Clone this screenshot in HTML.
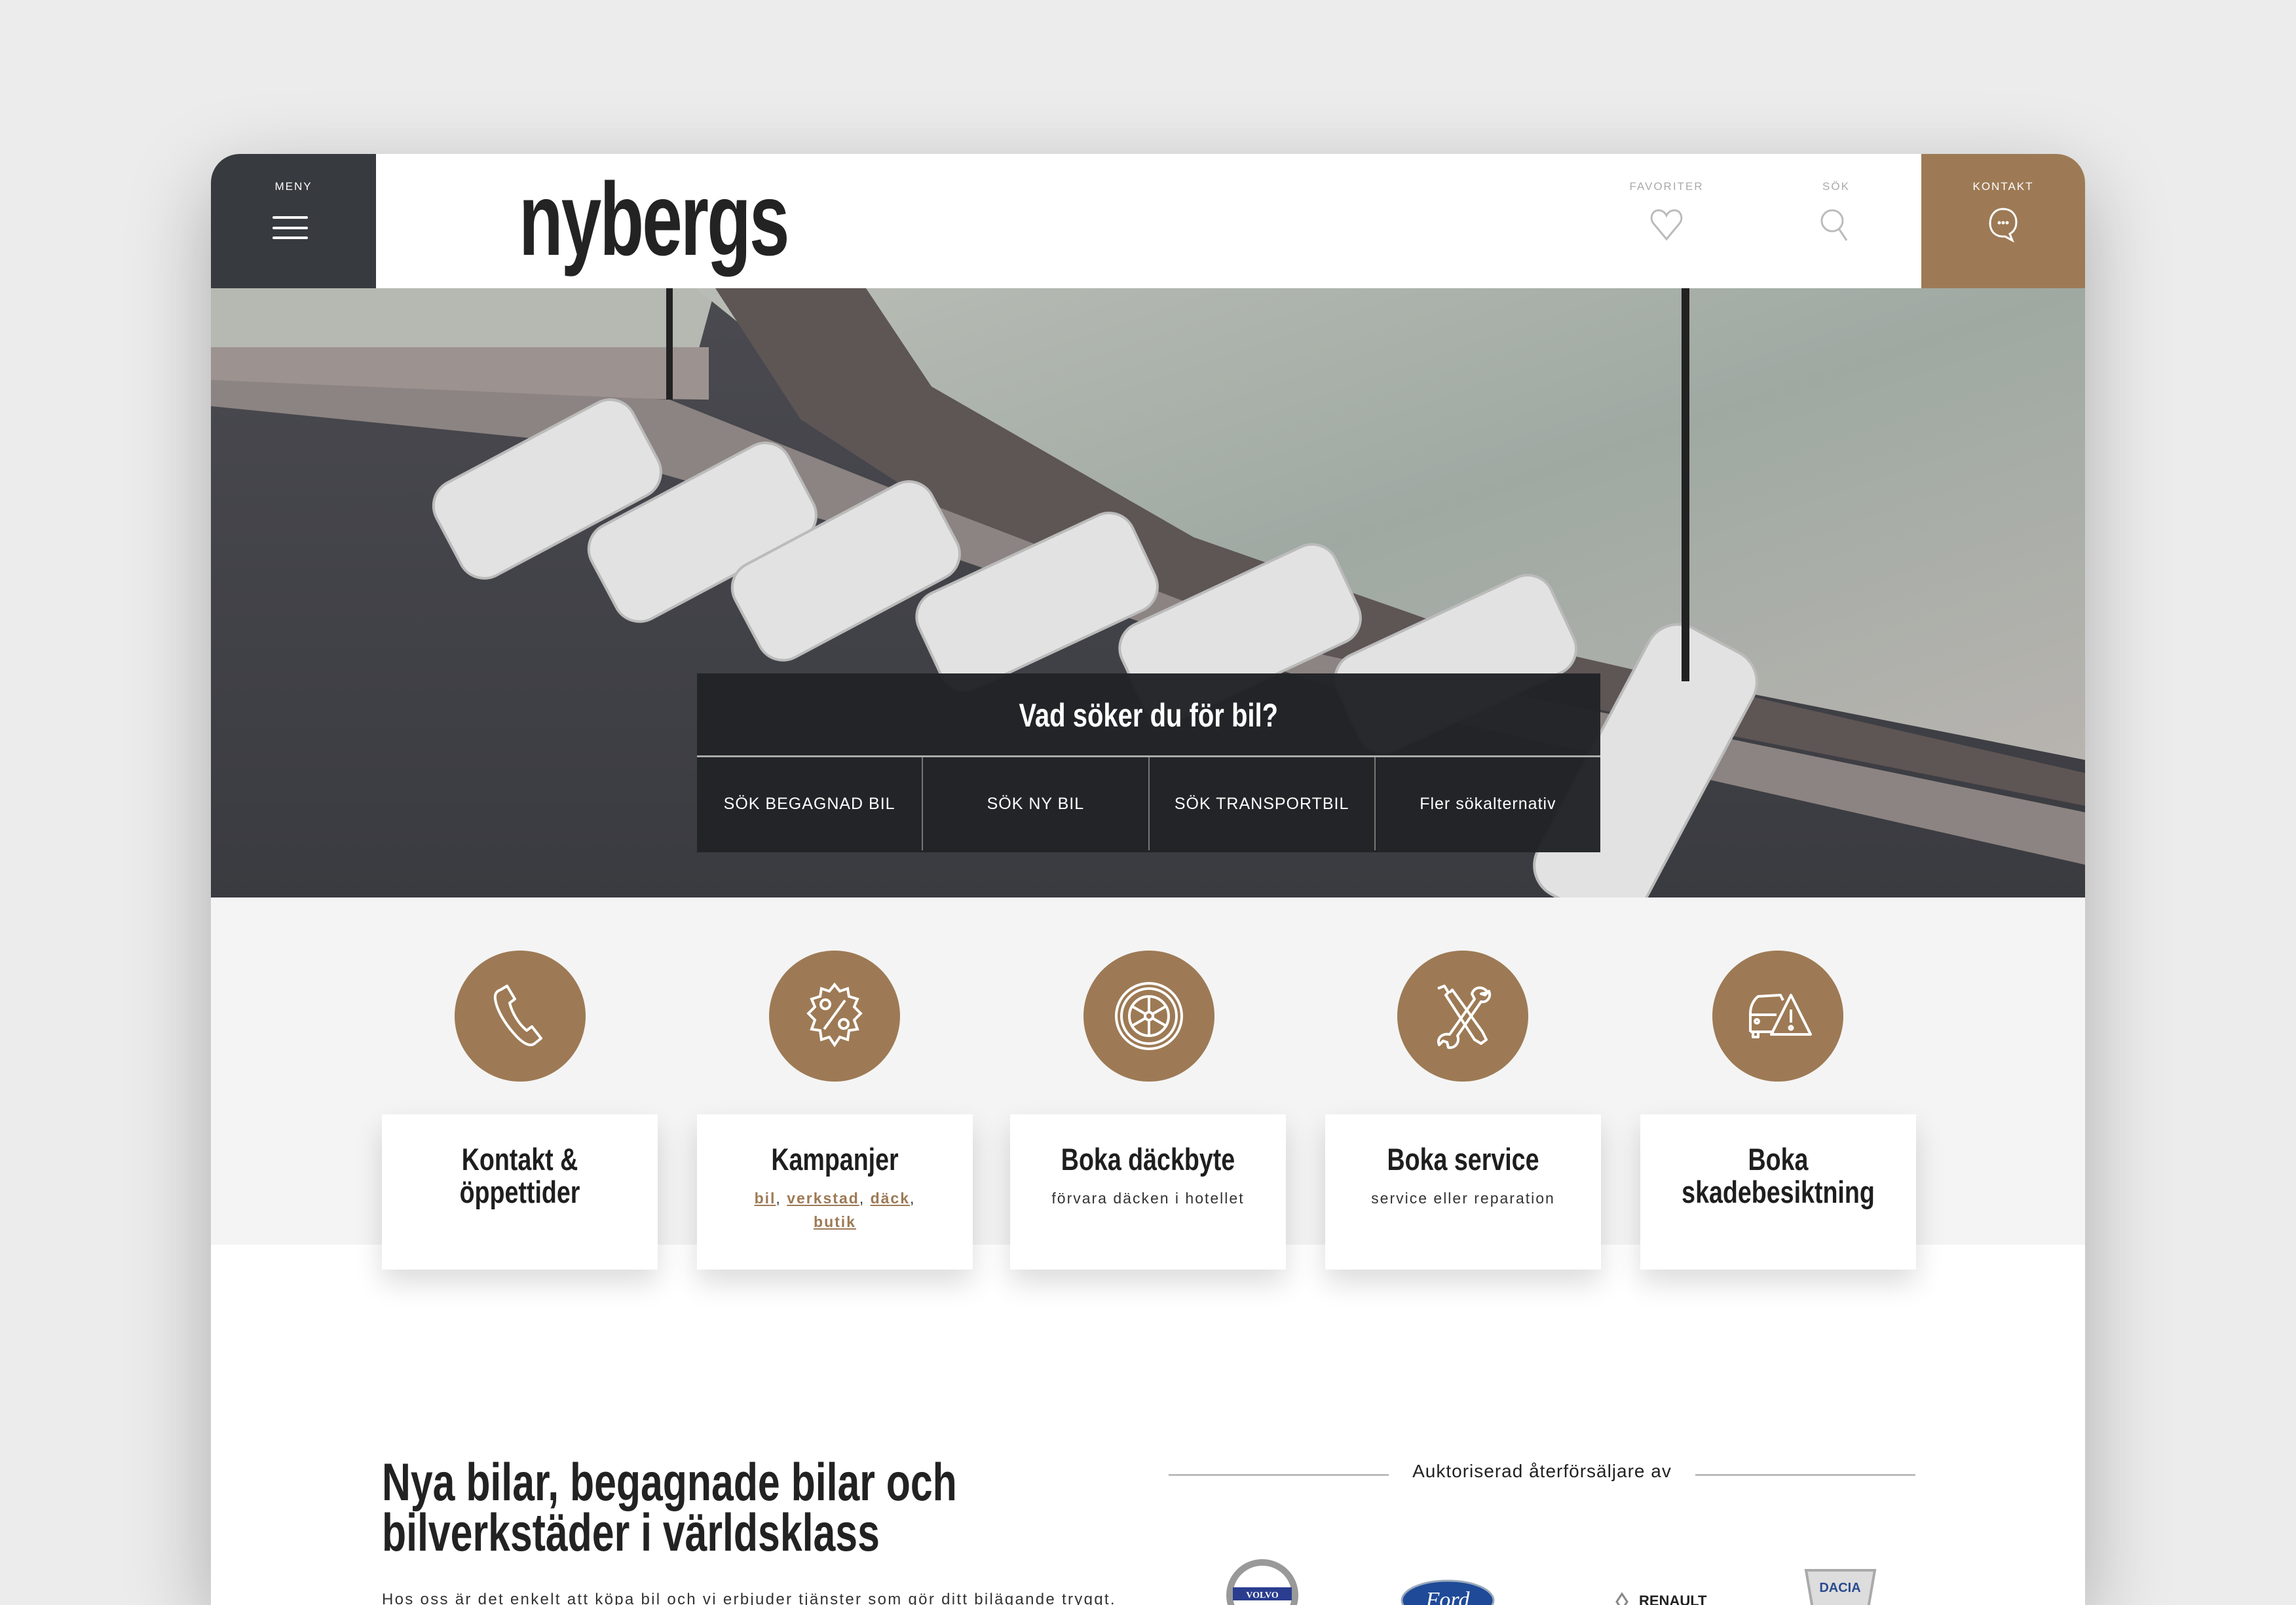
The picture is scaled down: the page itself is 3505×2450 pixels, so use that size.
<!DOCTYPE html>
<html><head><meta charset="utf-8"><style>
*{margin:0;padding:0;box-sizing:border-box}
html,body{width:3505px;height:2450px;overflow:hidden}
body{background:#ececec;font-family:"Liberation Sans",sans-serif;position:relative}
.sq{display:inline-block;transform:scaleX(.8)}
.frame{position:absolute;left:322px;top:235px;width:2861px;height:2215px;background:#fff;border-radius:44px 44px 0 0;overflow:hidden;box-shadow:0 40px 140px rgba(0,0,0,.28)}
.hdr{position:absolute;left:0;top:0;width:2861px;height:205px;background:#fff}
.menu{position:absolute;left:0;top:0;width:252px;height:205px;background:#373a3e;color:#fff}
.lbl{position:absolute;top:40px;width:100%;text-align:center;font-size:17px;letter-spacing:2px}
.hb{position:absolute;left:94px;width:54px;height:4px;background:#fff;border-radius:2px}
.logo{position:absolute;left:470px;top:10px;font-size:158px;font-weight:bold;color:#232323;letter-spacing:-4px;transform:scaleX(.7);transform-origin:left}
.ic{position:absolute;top:0;width:200px;height:205px}
.ic .lbl{color:#aaa}
.kont{position:absolute;left:2611px;top:0;width:250px;height:205px;background:#9d7a55}
.hero{position:absolute;left:0;top:205px;width:2861px;height:930px;overflow:hidden;background:#3c3d42}
.sbox{position:absolute;left:742px;top:588px;width:1379px;height:273px;background:rgba(33,35,38,.97);color:#fff}
.sbox h2{height:128px;line-height:128px;text-align:center;font-size:50px;font-weight:bold;border-bottom:3px solid #aaa}
.btns{display:flex;height:142px}
.btns div{flex:1;text-align:center;line-height:142px;font-size:25px;letter-spacing:1px;border-left:2px solid #777}
.btns div:first-child{border-left:none}
.grey{position:absolute;left:0;top:1135px;width:2861px;height:530px;background:#f4f4f4}
.circ{position:absolute;top:1216px;width:200px;height:200px;border-radius:50%;background:#9d7a55}
.circ svg{position:absolute;left:40px;top:40px;width:120px;height:120px}
.card{position:absolute;top:1466px;width:421px;height:237px;background:#fff;box-shadow:0 20px 40px rgba(0,0,0,.14);text-align:center;padding-top:44px}
.card h3{font-size:47px;font-weight:bold;color:#1e1e1e;line-height:50px;transform:scaleX(.8)}
.card p{font-size:23px;letter-spacing:2px;color:#333;margin-top:16px;line-height:36px}
.card a{color:#9d7a55;font-weight:bold;text-decoration:underline}
.h1{position:absolute;left:261px;top:1990px;font-size:81px;font-weight:bold;color:#222;line-height:77px;transform:scaleX(.75);transform-origin:left;white-space:nowrap}
.para{position:absolute;left:261px;top:2193px;font-size:24px;color:#333;letter-spacing:2.3px}
.auk{position:absolute;left:1462px;top:1995px;width:1140px;height:40px;text-align:center;font-size:28px;color:#222;letter-spacing:1px}
.auk:before,.auk:after{content:"";position:absolute;top:20px;width:336px;height:3px;background:#bbb}
.auk:before{left:0}.auk:after{right:0}
</style></head><body>
<div class="frame">
 <div class="hdr">
  <div class="menu"><div class="lbl">MENY</div>
   <div class="hb" style="top:95px"></div><div class="hb" style="top:111px"></div><div class="hb" style="top:126px"></div></div>
  <div class="logo">nybergs</div>
  <div class="ic" style="left:2122px"><div class="lbl">FAVORITER</div>
   <svg style="position:absolute;left:72px;top:80px" width="56" height="56" viewBox="0 0 56 56"><path d="M28 50 L8 26 C2 18 6 6 16 6 C22 6 26 10 28 14 C30 10 34 6 40 6 C50 6 54 18 48 26 Z" fill="none" stroke="#bbb" stroke-width="3"/></svg></div>
  <div class="ic" style="left:2381px"><div class="lbl">SÖK</div>
   <svg style="position:absolute;left:72px;top:80px" width="56" height="56" viewBox="0 0 56 56"><circle cx="22" cy="22" r="16" fill="none" stroke="#bbb" stroke-width="3"/><path d="M32 34 L44 52" stroke="#bbb" stroke-width="3"/></svg></div>
  <div class="kont"><div class="lbl" style="color:#fff">KONTAKT</div>
   <svg style="position:absolute;left:97px;top:80px" width="56" height="56" viewBox="0 0 56 56"><path d="M28 4 C16 4 8 13 8 26 C8 38 16 46 28 46 L31 46 L42 52 L38 42 C45 38 48 32 48 24 C48 12 40 4 28 4 Z" fill="none" stroke="#fff" stroke-width="3"/><circle cx="22" cy="25" r="2.5" fill="#fff"/><circle cx="28" cy="25" r="2.5" fill="#fff"/><circle cx="34" cy="25" r="2.5" fill="#fff"/></svg></div>
 </div>
 <div class="hero">
  <svg width="2861" height="930" viewBox="0 0 2861 930" style="position:absolute;left:0;top:0">
   <defs><linearGradient id="sea" x1="0" y1="0" x2="1" y2="1"><stop offset="0" stop-color="#b9bdb6"/><stop offset=".5" stop-color="#9fa9a2"/><stop offset="1" stop-color="#b8b4b0"/></linearGradient>
   <linearGradient id="rd" x1="0" y1="0" x2="0" y2="1"><stop offset="0" stop-color="#4a4a50"/><stop offset="1" stop-color="#3a3b40"/></linearGradient></defs>
   <rect width="2861" height="930" fill="url(#rd)"/>
   <polygon points="0,0 770,0 740,110 0,110" fill="#b6b8b2"/>
   <polygon points="0,90 760,90 760,170 0,160" fill="#9c9390"/>
   <polygon points="740,0 2861,0 2861,720 1600,470 1050,250" fill="url(#sea)"/>
   <polygon points="770,0 1000,0 1100,150 1500,380 1900,520 2861,740 2861,790 1700,560 1100,330 900,200" fill="#5e5555"/>
   <polygon points="0,140 700,170 1100,330 1700,560 2861,800 2861,880 1800,640 1100,400 500,230 0,180" fill="#8c8482"/>
   <g fill="#e2e2e2" stroke="#bbb" stroke-width="4">
    <rect x="-170" y="-75" width="340" height="160" rx="40" transform="translate(511,302) rotate(-28)"/>
    <rect x="-170" y="-75" width="340" height="160" rx="40" transform="translate(748,368) rotate(-28)"/>
    <rect x="-170" y="-75" width="340" height="160" rx="40" transform="translate(967,427) rotate(-28)"/>
    <rect x="-180" y="-75" width="360" height="160" rx="40" transform="translate(1259,474) rotate(-25)"/>
    <rect x="-180" y="-75" width="360" height="160" rx="40" transform="translate(1569,522) rotate(-25)"/>
    <rect x="-180" y="-75" width="360" height="160" rx="40" transform="translate(1898,569) rotate(-25)"/>
    <rect x="-230" y="-90" width="460" height="180" rx="50" transform="translate(2190,741) rotate(-62)"/>
   </g>
   <rect x="695" y="0" width="10" height="170" fill="#222"/>
   <rect x="2245" y="0" width="12" height="600" fill="#222"/>
  </svg>
  <div class="sbox"><h2><span class="sq">Vad söker du för bil?</span></h2>
   <div class="btns"><div>SÖK BEGAGNAD BIL</div><div>SÖK NY BIL</div><div>SÖK TRANSPORTBIL</div><div>Fler sökalternativ</div></div></div>
 </div>
 <div class="grey"></div>
 <div class="circ" style="left:372px"><svg viewBox="0 0 120 120" fill="none" stroke="#fff" stroke-width="4" stroke-linejoin="round"><path d="M30 20 L40 14 L52 34 L44 40 C48 56 58 72 70 82 L78 76 L92 94 L82 102 C74 108 62 100 50 86 C36 70 24 50 22 34 C21 26 24 22 30 20 Z"/></svg></div>
 <div class="circ" style="left:852px"><svg viewBox="0 0 120 120" fill="none" stroke="#fff" stroke-width="4"><path d="M60 12 L68 22 L80 18 L82 30 L95 34 L90 46 L100 56 L90 66 L95 80 L82 82 L80 96 L68 92 L60 104 L52 92 L40 96 L38 82 L25 80 L30 66 L20 56 L30 46 L25 34 L38 30 L40 18 L52 22 Z"/><circle cx="46" cy="42" r="7"/><circle cx="74" cy="72" r="7"/><path d="M76 36 L44 80"/></svg></div>
 <div class="circ" style="left:1332px"><svg viewBox="0 0 120 120" fill="none" stroke="#fff" stroke-width="4"><circle cx="60" cy="60" r="50"/><circle cx="60" cy="60" r="42"/><circle cx="60" cy="60" r="30"/><circle cx="60" cy="60" r="6"/><path d="M60 30 V54 M60 66 V90 M34 45 L55 57 M65 63 L86 75 M34 75 L55 63 M65 57 L86 45"/></svg></div>
 <div class="circ" style="left:1811px"><svg viewBox="0 0 120 120" fill="none" stroke="#fff" stroke-width="4" stroke-linejoin="round"><path d="M22 18 L32 14 L38 24 L34 28 L78 96 L88 102 L96 96 L90 84 L44 20 L40 24"/><path d="M98 24 C92 14 78 14 74 26 L78 34 L40 88 C28 86 20 94 24 104 L30 98 L36 100 L38 108 C48 110 56 100 52 90 L88 38 C96 40 104 32 100 22 L94 28 L88 26 Z"/></svg></div>
 <div class="circ" style="left:2292px"><svg viewBox="0 0 120 120" fill="none" stroke="#fff" stroke-width="4" stroke-linejoin="round"><path d="M18 84 V56 C18 46 22 36 30 30 L64 28 L68 36"/><path d="M18 58 H58 M18 84 H54 M22 84 V92 H30 V84"/><circle cx="28" cy="68" r="3"/><path d="M80 28 L110 88 H50 Z"/><path d="M80 50 V70"/><circle cx="80" cy="78" r="2.5"/></svg></div>
 <div class="card" style="left:261px"><h3>Kontakt &amp;<br>öppettider</h3></div>
 <div class="card" style="left:742px"><h3>Kampanjer</h3><p><a>bil</a>, <a>verkstad</a>, <a>däck</a>,<br><a>butik</a></p></div>
 <div class="card" style="left:1220px"><h3>Boka däckbyte</h3><p>förvara däcken i hotellet</p></div>
 <div class="card" style="left:1701px"><h3>Boka service</h3><p>service eller reparation</p></div>
 <div class="card" style="left:2182px"><h3>Boka<br>skadebesiktning</h3></div>
 <div class="h1">Nya bilar, begagnade bilar och<br>bilverkstäder i världsklass</div>
 <div class="para">Hos oss är det enkelt att köpa bil och vi erbjuder tjänster som gör ditt bilägande tryggt.</div>
 <div class="auk">Auktoriserad återförsäljare av</div>
 <svg style="position:absolute;left:1540px;top:2120px" width="1300" height="100" viewBox="0 0 1300 100">
  <circle cx="65" cy="80" r="50" fill="none" stroke="#999" stroke-width="10"/><rect x="20" y="68" width="90" height="20" fill="#2a3d8f"/><text x="65" y="84" font-size="14" font-weight="bold" fill="#fff" text-anchor="middle" font-family="Liberation Serif">VOLVO</text>
  <ellipse cx="348" cy="88" rx="70" ry="30" fill="#1f4a98" stroke="#9ab" stroke-width="3"/><text x="348" y="98" font-size="34" font-style="italic" fill="#fff" text-anchor="middle" font-family="Liberation Serif">Ford</text>
  <text x="640" y="96" font-size="22" font-weight="bold" fill="#222" font-family="Liberation Sans">RENAULT</text><path d="M614 78 L606 90 L614 102 L622 90 Z" fill="none" stroke="#888" stroke-width="3"/>
  <path d="M895 42 H1000 L990 100 H905 Z" fill="#ddd" stroke="#aaa" stroke-width="4"/><text x="947" y="75" font-size="20" font-weight="bold" fill="#2a4b8f" text-anchor="middle">DACIA</text>
 </svg>
</div>
</body></html>
